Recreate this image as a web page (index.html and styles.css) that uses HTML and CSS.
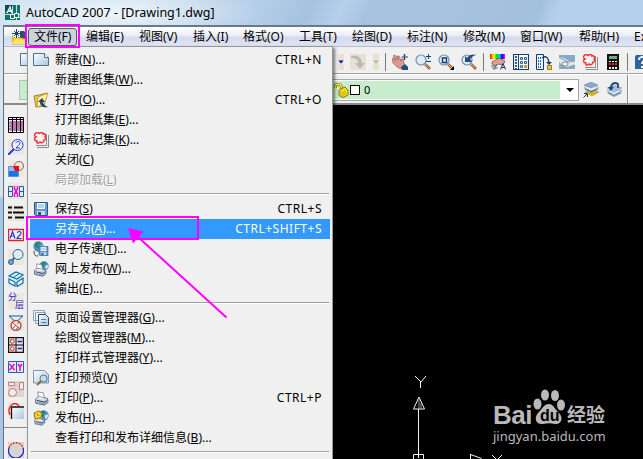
FILE: index.html
```html
<!DOCTYPE html>
<html lang="zh-CN">
<head>
<meta charset="utf-8">
<title>AutoCAD 2007 - [Drawing1.dwg]</title>
<link rel="stylesheet" href="styles.css">
</head>
<body>
<svg class="defs" width="0" height="0">
  <defs>
    <linearGradient id="paper" x1="0" y1="0" x2="1" y2="1"><stop offset="0" stop-color="#fdfeff"/><stop offset="1" stop-color="#a9c6dc"/></linearGradient>
    <linearGradient id="metal" x1="0" y1="0" x2="0" y2="1"><stop offset="0" stop-color="#f8fbff"/><stop offset="1" stop-color="#8e9db8"/></linearGradient>
    <linearGradient id="rainbow"><stop offset="0" stop-color="#f00"/><stop offset=".25" stop-color="#ff0"/><stop offset=".45" stop-color="#0d0"/><stop offset=".65" stop-color="#0cf"/><stop offset=".8" stop-color="#00f"/><stop offset="1" stop-color="#f0f"/></linearGradient>
    <symbol id="i-new" viewBox="0 0 16 16"><path d="M.5 1.500h11l4 4v8H.5z" fill="url(#paper)" stroke="#4a7191"/><path d="M11.500 1.500v4h4" fill="#fff" stroke="#4a7191"/></symbol>
    <symbol id="i-lens" viewBox="0 0 16 16"><path d="M10 10l5 5" stroke="#9a6232" stroke-width="2.600"/><path d="M10 10l4.500 4.500" stroke="#e0a772"/><circle cx="6" cy="6" r="5" fill="#dcecf8" stroke="#7590a8" stroke-width="1.200"/></symbol>
    <symbol id="i-cloud" viewBox="0 0 16 16"><path d="M3 13.500h10.500V2" stroke="#8d8d8d" fill="none"/><path d="M15.500 3v12.500H4" stroke="#8d8d8d" fill="none"/><path d="M3 1c2-1 3 0 3 1 1-2 4-2 4 0 2-1 3 1 2 3 1 1 1 3-1 3 0 3-3 3-4 2-2 2-4 1-3-1-3 0-3-3-1-4-2-1-2-3 0-4z" fill="#fff2f2" stroke="#f03434" stroke-width="1.500"/></symbol>
    <symbol id="i-disk" viewBox="0 0 16 16"><path d="M1.500 1.500h13v13h-12l-1-1z" fill="#6898cb" stroke="#285a92"/><path d="M4 2h8v6H4z" fill="#f4f9ff"/><path d="M5 4h6M5 6h6" stroke="#86abd0"/><path d="M4 10h8v4H4z" fill="#c7d9ed"/><path d="M5 11h3v3H5z" fill="#2c527b"/></symbol>
    <symbol id="i-printer" viewBox="0 0 16 16"><path d="M4 1l6 1 1 6-6 1z" fill="#fff" stroke="#8892a6"/><path d="M1.500 9l3-3 10 2 .5 4-4 3-9-2z" fill="url(#metal)" stroke="#59657e"/><path d="M3 10l8 2 3-2" stroke="#293957" fill="none"/><path d="M5 7l6 1" stroke="#fff"/></symbol>
    <symbol id="i-globe" viewBox="0 0 16 16"><circle cx="8" cy="8" r="7.500" fill="#4b92d0"/><path d="M3 3c3-3 7-2 8 0L8 7 7 11 5 10 2 7z" fill="#258b65"/><path d="M10 8l4-2c1 4-1 6-3 7z" fill="#e2f3ef"/></symbol>
  </defs>
</svg>

<div class="window">
  <header class="title">
    <svg class="app" viewBox="0 0 15 15"><path d="M0 0h15v15H0z" fill="#15716b"/><path d="M0 0h7v6H0z" fill="#0b4f50"/><path d="M2 8l3-6 2 6M3 6h4" stroke="#fff" stroke-width="1.300" fill="none"/><path d="M7.500 1v13M0 9.500h15M11.500 0v15M5 12.500h10" stroke="#d9ffff" stroke-width=".8"/><path d="M9.500 8.500h4v4h-4zM5.500 9.500h4v4h-4z" fill="#15716b" stroke="#fff"/></svg>
    <span>AutoCAD 2007 - [Drawing1.dwg]</span>
  </header>

  <div class="frame">
    <nav class="menubar">
      <svg class="ico" viewBox="0 0 16 16"><path d="M4 2h8l3 3v8H4z" fill="#294f78"/><path d="M0 7l4-1 2 2 8 2v5H0z" fill="#f3c72f" stroke="#b37c0a" stroke-width=".6"/><path d="M0 14l4-4 11 1-1 4H0z" fill="#ffe36a"/><path d="M1 1h7v7H1z" fill="#f4f8fc"/><path d="M4.500 0v9M0 4.500h9M2 2l5 5M7 2L2 7" stroke="#17416e"/></svg>
      <span class="open">文件(F)</span><span>编辑(E)</span><span>视图(V)</span><span>插入(I)</span><span>格式(O)</span><span>工具(T)</span><span>绘图(D)</span><span>标注(N)</span><span>修改(M)</span><span>窗口(W)</span><span>帮助(H)</span><span>Ex</span>
    </nav>

    <div class="bar std">
      <svg class="ico new"><use href="#i-new"/></svg>
      <div class="tools">
        <svg class="drop" viewBox="0 0 6 16"><path d="M0 0h6v16H0z" fill="#e9e0d2"/><path d="M.5 6.500h5L3 9.500z" fill="#00138c"/></svg>
        <svg class="ico redo" viewBox="0 0 16 16"><path d="M0 0h16v16H0z" fill="#e9e0d2"/><path d="M1 2c6-2 11 1 11 7h3l-5 6-5-6h3c0-3-2-5-7-5z" fill="#b5bbc0"/></svg>
        <svg class="drop" viewBox="0 0 6 16"><path d="M0 0h6v16H0z" fill="#e9e0d2"/><path d="M.5 6.500h5L3 9.500z" fill="#aaaab0"/></svg>
        <i class="sep"></i>
        <svg class="ico" viewBox="0 0 16 16"><path d="M0 5l1-1 3 3-3-5 2-1 3 5-1-4 2 0 2 5 0-2 2 0 1 4 1 3-4 3-4-2-4-4z" fill="#d99a92" stroke="#8e4e50" stroke-width=".6"/><path d="M9 13l4-3 3 3v3h-6z" fill="#234f7c"/><path d="M12.500 0v6M9.500 3h6.500M11.500 1h2M11.500 5h2" stroke="#1c466f"/></svg>
        <svg class="ico" viewBox="0 0 16 16"><use href="#i-lens"/><path d="M13.500 0v5M11 2.500h5M11 7.500h5" stroke="#173e6d"/></svg>
        <svg class="ico" viewBox="0 0 16 16"><use href="#i-lens"/><path d="M4.500 4h4v4.500h-4z" fill="none" stroke="#153d70" stroke-width="1.400"/><path d="M16 12v4h-4z"/></svg>
        <svg class="ico" viewBox="0 0 16 16"><use href="#i-lens"/><path d="M4 8V2l2 2c2-4 7-4 10-3-3 0-5 2-7 4l2 3z" fill="#214f80"/></svg>
        <i class="sep"></i>
        <svg class="ico" viewBox="0 0 16 16"><path d="M0 0h15v5H0z" fill="url(#rainbow)"/><path d="M2 8l7-4 6 3-2 4-5-1-2 2-4-2z" fill="#e1a094" stroke="#793f43" stroke-width=".7"/><path d="M1 12h5M2 14h6M7 10L4 16" stroke="#586a80"/><path d="M10.500 15.500l2.500-6 2.500 6M11.500 13.500h3" stroke="#19314d" fill="none"/></svg>
        <svg class="ico" viewBox="0 0 16 16"><path d="M.5.500h15v15H.5z" fill="#fff" stroke="#123c72" stroke-width="1.200"/><path d="M3 2v13" stroke="#315e91" stroke-width="2" stroke-dasharray="2 1"/><path d="M5.500 1v14" stroke="#123c72"/><path d="M7.500 3.500h2v2h-2zM7.500 7.500h2v2h-2zM7.500 11.500h2v2h-2zM11.500 3.500h2v2h-2zM11.500 7.500h2v2h-2z" fill="#dce8f5" stroke="#355d90"/><path d="M11 11h3v3h-3z" fill="#ca9e17"/></svg>
        <svg class="ico" viewBox="0 0 16 16"><path d="M.5.500h7v15h-7z" fill="#e9f5ff" stroke="#123c72"/><path d="M2 4h4M2 7h4M2 10h4M2 13h4" stroke="#355f90" stroke-width="2" stroke-dasharray="1 1"/><path d="M6 4c4-3 7 0 7 6" stroke="#173d70" fill="none" stroke-width="1.300"/><path d="M10 8h6l-3 3z" fill="#173d70"/><path d="M11.500 11.500h4v4h-4z" fill="#e4cc55" stroke="#967e19"/></svg>
        <svg class="ico" viewBox="0 0 16 16"><path d="M0 1h16v14H0z" fill="#82aaca"/><path d="M0 3l5 1 5 3h6v4l-8 3-8-4z" fill="#dce5e8"/><path d="M0 3l9 5 7-1M0 9l7 5 9-3" fill="none" stroke="#8b9aa0"/><ellipse cx="6" cy="10" rx="3" ry="2" fill="#f6f8f7" stroke="#7a888d"/></svg>
        <svg class="ico"><use href="#i-cloud"/></svg>
        <svg class="ico" viewBox="0 0 16 16"><path d="M2 0h12v16H2z" fill="#111"/><path d="M4 2h8v3H4z" fill="#75a78a"/><path d="M4 7h2v1H4zM7 7h2v1H7zM10 7h2v1h-2z" fill="#fff"/><path d="M4 9h2v2H4zM7 9h2v2H7zM10 9h2v2h-2z" fill="#ef1d25"/><path d="M4 13h2v2H4zM7 13h2v2H7zM10 13h2v2h-2z" fill="#eee"/></svg>
        <i class="sep"></i>
        <svg class="ico" viewBox="0 0 16 16"><path d="M2 1h14v14H1V3z" fill="#2c659e"/><path d="M5 6c0-4 6-4 6-1 0 2-3 2-3 5M8 12v2" stroke="#fff" stroke-width="2" fill="none"/></svg>
      </div>
    </div>

    <div class="bar layer">
      <div class="well">.</div>
      <div class="combo">
        <div class="value">
          <svg class="lock" viewBox="0 0 15 15"><path d="M1.500 5c-1-5 6-5 6 0v3" fill="none" stroke="#887800" stroke-width="3"/><path d="M1.500 5c-1-5 6-5 6 0v3" fill="none" stroke="#ffef3e" stroke-width="1.300"/><path d="M5 7l6-3 3 3v5l-5 2.500-4-2z" fill="#f0df31" stroke="#847600"/><path d="M7 8v5M9 8v5M11 7v5" stroke="#c3b200"/></svg>
          <i class="swatch"></i><span>0</span>
        </div>
        <svg class="caret" viewBox="0 0 8 4"><path d="M0 0h8L4 4z"/></svg>
      </div>
      <svg class="ico" viewBox="0 0 16 16"><path d="M2 10l7-3 7 3-7 4z" fill="#d6b420" stroke="#b79400" stroke-width=".5"/><path d="M1 7l7-3 8 3-8 3.500z" fill="#4d729d"/><path d="M1 5.500l7-3 8 3-8 3.500z" fill="#e3edf5" stroke="#7795ae" stroke-width=".5"/><path d="M1 3l7-3 7 3-7 3z" fill="#8aa9c6" stroke="#6688a8" stroke-width=".5"/><path d="M.5 15.500l3.500-3.500M1 11.500h3.500V15" stroke="#14386a" fill="none"/></svg>
      <svg class="ico second" viewBox="0 0 16 16"><path d="M1 11l7-3 8 3-8 4z" fill="#7897b5"/><path d="M1 9l7-3 8 3-8 4z" fill="#dce8f2" stroke="#52749a" stroke-width=".5"/><path d="M1 6l7-3 8 3-8 4z" fill="#a9c1d6" stroke="#6d8cab" stroke-width=".5"/><path d="M5 6c0-5 4-6 7-4v4" stroke="#214975" stroke-width="1.800" fill="none"/><path d="M2 5h6L5 9z" fill="#214975"/></svg>
    </div>

    <div class="work">
      <aside>
        <svg class="ico" viewBox="0 0 16 16"><path d="M0 0h16v16H0z" fill="#fff"/><path d="M2 4.500h13M2 7.500h13M2 10.500h13M2 13.500h13" stroke="#ff50d8"/><path d="M.5.500h15v15H.5zM4.500 1v14M8.500 1v14M12.500 1v14M1 2.500h14" stroke="#000" fill="none"/><path d="M1 6h14M1 9h14M1 12h14" stroke="#222"/></svg>
        <svg class="ico" viewBox="0 0 16 16"><path d="M0 0h16v16H0z" fill="#ece7dc"/><path d="M0 16l6-6" stroke="#263fda" stroke-width="2"/><circle cx="9.500" cy="6" r="5.500" fill="#eef3ff" stroke="#243ad0"/><path d="M8 4c0-2 4-2 4 0 0 2-3 3-4 5h4" fill="none" stroke="#243ad0"/></svg>
        <svg class="ico" viewBox="0 0 16 16"><path d="M0 0h16v16H0z" fill="#ece7dc"/><path d="M.5 5.500h10v10H.5z" fill="#91baf0" stroke="#5f93d4"/><path d="M1 10h9v5H1z" fill="#1777df"/><circle cx="11" cy="5" r="4.500" fill="#ece7dc" stroke="#a15b55"/><path d="M5 5h6v5H7z" fill="#f00"/></svg>
        <svg class="ico" viewBox="0 0 16 16"><path d="M0 0h16v16H0z" fill="#ece7dc"/><path d="M.5 3.500h4v10h-4zM.5 8.500h4M11.500 3.500h4v10h-4zM11.500 8.500h4" fill="none" stroke="#255bbb"/><path d="M6.500 3v3l3 5v3M9.500 3v3l-3 5v3" stroke="#f0d" stroke-width="1.600" fill="none"/></svg>
        <svg class="ico" viewBox="0 0 16 16"><path d="M0 0h16v16H0z" fill="#ece7dc"/><path d="M0 2.500h4M6 2.500h9M0 7.500h4M5 7.500h11M0 12.500h4M7 12.500h9" stroke="#111" stroke-width="2.200"/></svg>
        <svg class="ico" viewBox="0 0 16 16"><path d="M.5 2.500h15v11H.5z" fill="#efefff" stroke="#e22425" stroke-width="1.400"/><path d="M2 11.500l2.500-7 2.500 7M3 9h3M9.500 6c0-2 3.500-2 3.500 0 0 2-3 3-4 5.500h4.500" stroke="#223dc9" fill="none" stroke-width="1.200"/></svg>
        <svg class="ico" viewBox="0 0 16 16"><path d="M0 0h16v16H0z" fill="#ece7dc"/><path d="M3 13l4-5" stroke="#245897" stroke-width="2"/><circle cx="10" cy="5.500" r="5" fill="#dcecf5" stroke="#2b659d"/><circle cx="3" cy="13" r="2.500" fill="#72a3cf" stroke="#2b659d"/></svg>
        <svg class="ico" viewBox="0 0 16 16"><path d="M0 0h16v16H0z" fill="#e8ebe8"/><path d="M1 5l7-4 7 3-6 4zM1 8l6 3v4l-6-3zM9 11l6-4v5l-6 3.500z" fill="#def4ff" stroke="#076fa9" stroke-width="1.200"/><path d="M5 6.500l6-3.500" stroke="#076fa9"/></svg>
        <div class="ico fen"><span>分</span><span>层</span></div>
        <svg class="ico" viewBox="0 0 16 16"><path d="M0 0h16v16H0z" fill="#ece7dc"/><path d="M1 1h14L8 7z" fill="#e4f4ff" stroke="#175c98"/><circle cx="8" cy="10.500" r="5" fill="#f4e9e4" stroke="#c94235" stroke-width="1.300"/><path d="M4 7l8 7" stroke="#c94235"/><path d="M5 13l3-3M9 9l2-2M8 14l3-2" stroke="#317cab"/></svg>
        <svg class="ico" viewBox="0 0 16 16"><path d="M.5.500h15v15H.5z" fill="#e8e1de" stroke="#111" stroke-width="1.400"/><path d="M8 1v14M1 8h14" stroke="#111"/><circle cx="4.300" cy="4.300" r="2" fill="none" stroke="#c33"/><circle cx="4.300" cy="11.800" r="2" fill="none" stroke="#c33"/><path d="M9.500 4.500h4.500M9.500 11.500h4.500" stroke="#0825e5" stroke-width="1.500"/></svg>
        <svg class="ico" viewBox="0 0 16 16"><path d="M.5 2.500h15v11H.5z" fill="#eee8df" stroke="#1760cc"/><path d="M8.500 3v10" stroke="#1760cc"/><path d="M1.500 5l5 6M6.500 5l-5 6M10 5l2 3 2-3M12 8v4" stroke="#e20fd5" fill="none" stroke-width="1.600"/></svg>
        <svg class="ico" viewBox="0 0 16 16"><path d="M0 0h16v16H0z" fill="#d8d4ce"/><path d="M.5 1.500h6v3h-6zM11.500 1.500h4v7h-4z" fill="#eee" stroke="#cd7776"/><circle cx="4.500" cy="11.500" r="4" fill="#eee" stroke="#cd7776"/></svg>
        <svg class="ico" viewBox="0 0 16 16"><path d="M0 0h16v16H0z" fill="#ece7dc"/><path d="M2 12C-2 3 7-3 11 3" fill="none" stroke="#ef1616" stroke-width="1.300"/><path d="M4 16V4h12v12z" fill="url(#paper)"/><path d="M3.500 16V4H16" fill="none" stroke="#111" stroke-width="1.300"/></svg>
        <hr>
        <svg class="ico" viewBox="0 0 16 16"><path d="M0 0h16v16H0z" fill="#d8d4ce"/><path d="M1 6a7.500 7.500 0 1 0 14 0" fill="none" stroke="#2222e8" stroke-width="1.300"/><path d="M1 6C3-1 13-1 15 6" fill="none" stroke="#e51818" stroke-width="1.300" stroke-dasharray="2 1"/></svg>
      </aside>
      <main>
        <svg class="ucs" viewBox="0 0 100 84"><path d="M2 1l6 6 5-6M7.500 7v6M5.500 83V34M0.500 34h11L6 22zM.500 79.500h10v9h-10zM57.500 79.500l11 4M57.500 79v6M79 80l5 5M89 80l-5 5" fill="none" stroke="#f4f4f4"/><path d="M6 23v11M8 28v6" stroke="#999"/></svg>
        <div class="mark">
          <div class="brand"><span class="bai">Bai</span>
            <svg class="paw" viewBox="0 0 32 36"><g fill="#b9b9b9"><ellipse cx="4.500" cy="15" rx="4" ry="5.500"/><ellipse cx="12" cy="6" rx="4" ry="5.500"/><ellipse cx="22" cy="6.500" rx="4" ry="5.500"/><ellipse cx="28" cy="16" rx="4" ry="5.500"/><path d="M16 15c4 0 6 5 10 9 5 5 2 12-4 11-4-1-8-1-12 0-6 1-10-5-5-11 4-4 6-9 11-9z"/></g><text x="7" y="32">du</text></svg>
            <span class="jing">经验</span></div>
          <div class="url">jingyan.baidu.com</div>
        </div>
      </main>
    </div>
  </div>
</div>

<div class="menu">
  <div class="row"><svg class="ico"><use href="#i-new"/></svg><span>新建(<u>N</u>)...</span><kbd>CTRL+N</kbd></div>
  <div class="row"><i></i><span>新建图纸集(<u>W</u>)...</span></div>
  <div class="row"><svg class="ico" viewBox="0 0 16 16"><path d="M1 4l5-1 8-2-3 13-8 1z" fill="#e5c45a" stroke="#b08824"/><path d="M5 5l10-4-4 12-7 2z" fill="#fff1a6" stroke="#b08824" stroke-width=".7"/><path d="M15 15c-5 1-8-1-8-5H5l4-4 3 4h-2c0 2 2 4 5 5z" fill="#25486c"/></svg><span>打开(<u>O</u>)...</span><kbd>CTRL+O</kbd></div>
  <div class="row"><i></i><span>打开图纸集(<u>E</u>)...</span></div>
  <div class="row"><svg class="ico"><use href="#i-cloud"/></svg><span>加载标记集(<u>K</u>)...</span></div>
  <div class="row"><i></i><span>关闭(<u>C</u>)</span></div>
  <div class="row off"><i></i><span>局部加载(<u>L</u>)</span></div>
  <hr>
  <div class="row"><svg class="ico"><use href="#i-disk"/></svg><span>保存(<u>S</u>)</span><kbd>CTRL+S</kbd></div>
  <div class="row on"><i></i><span>另存为(<u>A</u>)...</span><kbd>CTRL+SHIFT+S</kbd></div>
  <div class="row"><svg class="ico" viewBox="0 0 16 16"><use href="#i-globe" width="11" height="11"/><use href="#i-disk" x="5" y="4" width="11" height="12"/><path d="M1 10c0 4 1 5 4 5" stroke="#333" fill="none"/></svg><span>电子传递(<u>T</u>)...</span></div>
  <div class="row"><svg class="ico" viewBox="0 0 16 16"><use href="#i-globe" x="6" width="10" height="10"/><use href="#i-printer" y="2" width="14" height="14"/></svg><span>网上发布(<u>W</u>)...</span></div>
  <div class="row"><i></i><span>输出(<u>E</u>)...</span></div>
  <hr>
  <div class="row"><svg class="ico" viewBox="0 0 16 16"><path d="M.5.500h11v10H.5zM2.500 2.500h10v11h-10z" fill="#edf8fd" stroke="#8ba3b5"/><path d="M5.500 4.500h7l3 3v8h-10z" fill="url(#paper)" stroke="#264e6d"/><path d="M8 9.500h5M8 12.500h5" stroke="#527b96"/></svg><span>页面设置管理器(<u>G</u>)...</span></div>
  <div class="row"><i></i><span>绘图仪管理器(<u>M</u>)...</span></div>
  <div class="row"><i></i><span>打印样式管理器(<u>Y</u>)...</span></div>
  <div class="row"><svg class="ico" viewBox="0 0 16 16"><path d="M.5.500h11l4 4V13H.5z" fill="url(#paper)" stroke="#7898ae"/><path d="M8 11l-4 4" stroke="#9a6431" stroke-width="2.200"/><circle cx="10.500" cy="8.500" r="3.500" fill="#c3dcee" stroke="#57738e"/></svg><span>打印预览(<u>V</u>)</span></div>
  <div class="row"><svg class="ico" viewBox="0 0 16 16"><use href="#i-printer" x="1" y="1" width="15" height="15"/></svg><span>打印(<u>P</u>)...</span><kbd>CTRL+P</kbd></div>
  <div class="row"><svg class="ico" viewBox="0 0 16 16"><use href="#i-globe" x="5" width="11" height="11"/><use href="#i-printer" y="4" width="13" height="12"/><path d="M1 3l5-2 3 2-1 5-6 1z" fill="#f1cf3a" stroke="#987812"/><path d="M4 4l2 2" stroke="#987812"/></svg><span>发布(<u>H</u>)...</span></div>
  <div class="row"><i></i><span>查看打印和发布详细信息(<u>B</u>)...</span></div>
  <hr>
</div>

<div class="hilite file"></div>
<div class="hilite saveas"></div>
<svg class="arrow" viewBox="0 0 100 90"><path d="M98.500 89.500L10 9" stroke="#f0f" stroke-width="2"/><path d="M0 0l15.500 3.500L5 15.500z" fill="#f0f"/></svg>
</body>
</html>
```

FILE: styles.css
```css
* { box-sizing: border-box; }
body {
  margin: 0;
  width: 643px;
  height: 459px;
  overflow: hidden;
  position: relative;
  background: #b4cce6;
  color: #000;
  font: 12px/20px "Noto Sans", "Noto Sans CJK SC", sans-serif;
}
.defs { position: absolute; }
svg { display: block; flex: none; }
.ico { width: 16px; height: 16px; flex: none; }

.window {
  height: 459px;
  display: flex;
  flex-direction: column;
  background: linear-gradient(#d5e4f3 0 196px, #a6c6e6 198px);
}
.title {
  height: 25px;
  display: flex;
  align-items: center;
  gap: 6px;
  padding: 0 5px;
  background:
    radial-gradient(ellipse 150px 26px at 110px 13px, rgba(255,255,255,.65), transparent),
    linear-gradient(115deg, #cbdff0 0 22%, #b5cee8 40%, #a6c2e0 48%, #b6d0eb 53%, #a8c3e0 57%, #a3c0de 83%, #b4d0ec 86%);
}
.title span { font-size: 12.500px; white-space: nowrap; }
.app { width: 15px; height: 15px; }
.frame {
  flex: 1;
  min-height: 0;
  margin-left: 3px;
  border-left: 1px solid #666e78;
  border-top: 2px solid #6d7885;
  background: #f0f0f0;
  display: flex;
  flex-direction: column;
}
.menubar {
  height: 20px;
  flex: none;
  display: grid;
  grid-template-columns: 22px 52px 53px 54px 50px 56px 53px 55px 56px 57px 59px 55px 17px;
  padding-left: 8px;
  align-items: center;
  white-space: nowrap;
  overflow: hidden;
  background: linear-gradient(#fff, #e9edf7 45%, #d5dbec 55%, #dfe4f4);
  border-bottom: 1px solid #b6bccc;
}
.menubar .open {
  height: 18px;
  line-height: 16px;
  width: 49px;
  margin-left: -6px;
  padding-left: 5px;
  border: 1px solid #555b68;
  border-radius: 3px;
  background: #ced2df;
}
.bar { flex: none; display: flex; align-items: center; }
.std {
  height: 27px;
  padding-left: 16px;
  border-bottom: 1px solid #a0a0a0;
  overflow: hidden;
}
.new { margin-right: 302px; }
.tools { display: flex; align-items: center; gap: 7px; padding-top: 3px; }
.drop { width: 6px; height: 16px; }
.redo { margin-left: -1px; }
.sep { width: 1px; height: 18px; background: #777; margin: 0 -1px 0 -1px; }
.layer {
  height: 31px;
  border-top: 1px solid #fff;
  border-bottom: 2px solid #8b8b8b;
  padding: 2px 0 0 15px;
  background: linear-gradient(90deg, transparent 623px, #8b8b8b 623px 624px, #fff 624px 625px, transparent 625px);
}
.well { width: 30px; height: 20px; background: #c7edcc; border: 1px solid #bbb; padding-left: 6px; line-height: 16px; }
.combo {
  width: 255px;
  height: 22px;
  margin: 0 4px 0 275px;
  padding: 1px 4px 1px 0;
  display: flex;
  align-items: center;
  justify-content: space-between;
  background: #fff;
  border: 1px solid #a8a8a8;
}
.value { width: 235px; height: 18px; display: flex; align-items: center; gap: 1px; padding-left: 9px; background: #c7edcc; }
.value span { margin-left: 3px; font-size: 11px; }
.lock { width: 15px; height: 15px; }
.swatch { width: 10px; height: 10px; border: 1px solid #000; background: #fff; }
.caret { width: 8px; height: 4px; }
.second { margin-left: 7px; }
.work { flex: 1; min-height: 0; display: flex; }
aside {
  width: 24px;
  flex: none;
  padding: 12px 4px 0;
  display: flex;
  flex-direction: column;
  gap: 6px;
  overflow: hidden;
}
aside hr { width: 24px; margin: 2px -4px 8px; border: 0; border-top: 1px solid #888; height: 1px; flex: none; }
.fen { background: #ece8dd; color: #2a25c5; font-size: 9px; line-height: 8px; }
.fen span { display: block; }
.fen span + span { margin-left: 7px; }
main { flex: 1; position: relative; background: #000; }
.ucs { position: absolute; left: 385px; top: 270px; width: 100px; height: 84px; }
.mark { position: absolute; left: 465px; top: 284px; width: 120px; color: #b9b9b9; }
.brand { display: flex; align-items: flex-start; height: 38px; }
.bai { font: bold 26px/26px "Liberation Sans", sans-serif; width: 40px; padding-top: 13px; letter-spacing: -.5px; }
.paw { width: 32px; height: 36px; margin-right: 2px; }
.paw text { font: bold 16px "Liberation Sans", sans-serif; fill: #000; }
.jing { font: bold 19px/24px "Noto Sans CJK SC", sans-serif; padding-top: 13px; white-space: nowrap; }
.url { font-size: 13px; line-height: 18px; white-space: nowrap; }

.menu {
  position: absolute;
  left: 27px;
  top: 46px;
  width: 306px;
  height: 420px;
  padding: 3px 2px 0 2px;
  background: #f0f0f0;
  border: 1px solid #979797;
  box-shadow: 2px 2px 3px rgba(0,0,0,.5);
}
.row { height: 20px; display: flex; align-items: center; padding: 0 8px 0 3px; white-space: nowrap; }
.row > :first-child { width: 16px; margin-right: 6px; }
kbd { font: inherit; margin-left: auto; letter-spacing: .5px; }
.menu hr { margin: 3px 1px 4px; height: 2px; border: 0; border-top: 1px solid #a0a0a0; border-bottom: 1px solid #fff; }
.on { background: #3399ff; color: #fff; }
.off { color: #a0a0a0; text-shadow: 1px 1px #fff; }
u { text-underline-offset: 1px; }
.hilite { position: absolute; border: 2px solid #f0f; }
.file { left: 25px; top: 24px; width: 55px; height: 24px; }
.saveas { left: 26px; top: 216px; width: 173px; height: 24px; }
.arrow { position: absolute; left: 128px; top: 228px; width: 100px; height: 90px; }
```
